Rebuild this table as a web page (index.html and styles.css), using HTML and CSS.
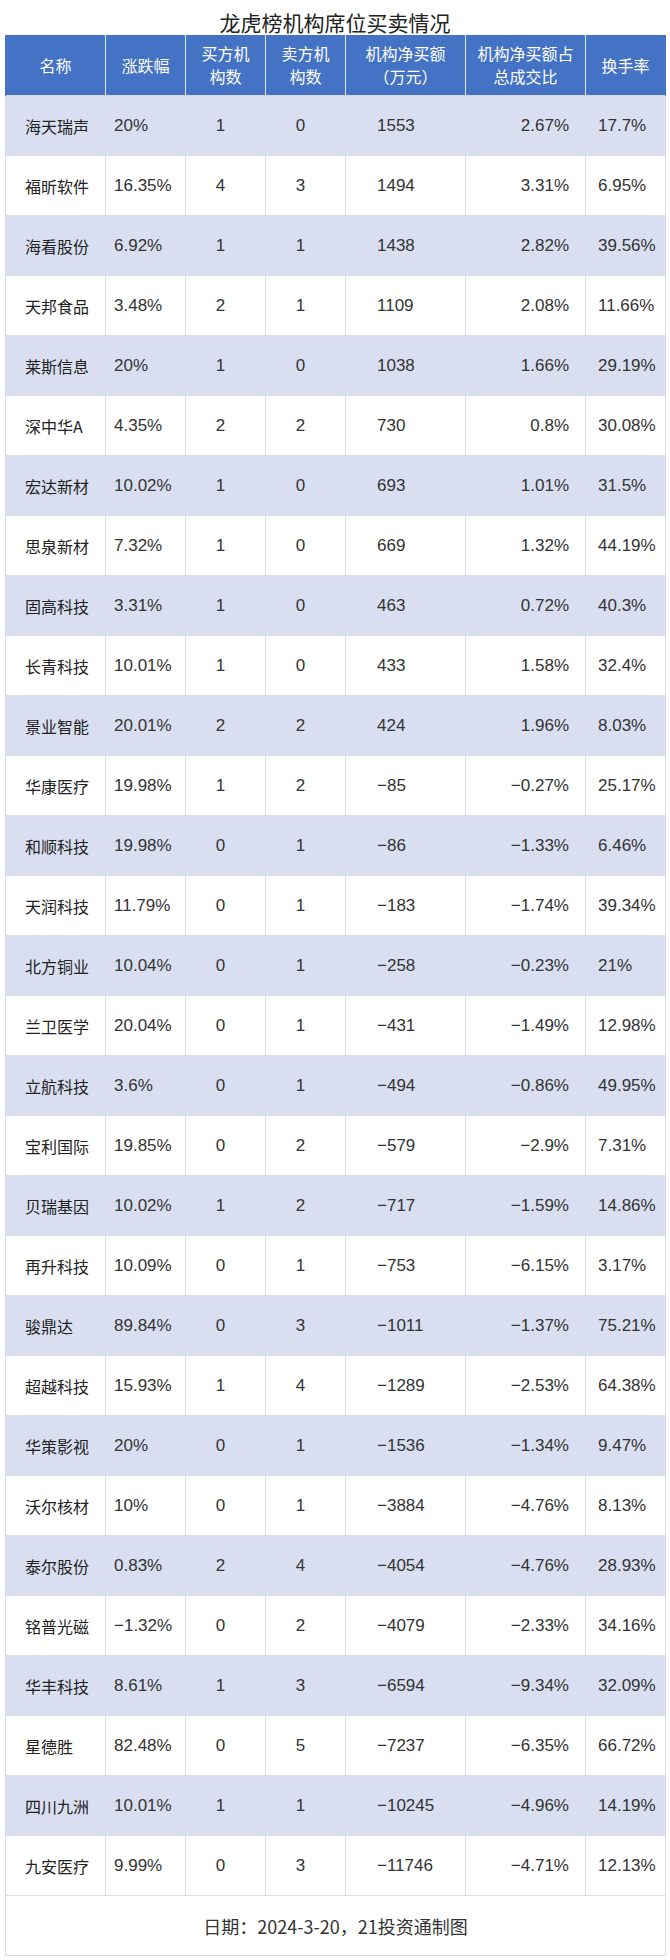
FILE: index.html
```html
<!DOCTYPE html>
<html lang="zh">
<head>
<meta charset="utf-8">
<title>龙虎榜机构席位买卖情况</title>
<link rel="stylesheet" href="styles.css">
</head>
<body>
<div class="page">
  <div class="title">龙虎榜机构席位买卖情况</div>
  <table class="grid">
    <colgroup>
      <col class="w-name"><col class="w-chg"><col class="w-cnt"><col class="w-cnt"><col class="w-amt"><col class="w-ratio"><col class="w-turn">
    </colgroup>
    <thead>
      <tr>
        <th>名称</th>
        <th>涨跌幅</th>
        <th>买方机<br>构数</th>
        <th>卖方机<br>构数</th>
        <th>机构净买额<br><span class="unit"><span class="paren">（</span>万元<span class="paren">）</span></span></th>
        <th>机构净买额占<br>总成交比</th>
        <th>换手率</th>
      </tr>
    </thead>
    <tbody>
      <tr class="alt"><td class="c-name">海天瑞声</td><td class="c-chg">20%</td><td class="c-cnt">1</td><td class="c-cnt">0</td><td class="c-amt">1553</td><td class="c-ratio">2.67%</td><td class="c-turn">17.7%</td></tr>
      <tr><td class="c-name">福昕软件</td><td class="c-chg">16.35%</td><td class="c-cnt">4</td><td class="c-cnt">3</td><td class="c-amt">1494</td><td class="c-ratio">3.31%</td><td class="c-turn">6.95%</td></tr>
      <tr class="alt"><td class="c-name">海看股份</td><td class="c-chg">6.92%</td><td class="c-cnt">1</td><td class="c-cnt">1</td><td class="c-amt">1438</td><td class="c-ratio">2.82%</td><td class="c-turn">39.56%</td></tr>
      <tr><td class="c-name">天邦食品</td><td class="c-chg">3.48%</td><td class="c-cnt">2</td><td class="c-cnt">1</td><td class="c-amt">1109</td><td class="c-ratio">2.08%</td><td class="c-turn">11.66%</td></tr>
      <tr class="alt"><td class="c-name">莱斯信息</td><td class="c-chg">20%</td><td class="c-cnt">1</td><td class="c-cnt">0</td><td class="c-amt">1038</td><td class="c-ratio">1.66%</td><td class="c-turn">29.19%</td></tr>
      <tr><td class="c-name">深中华A</td><td class="c-chg">4.35%</td><td class="c-cnt">2</td><td class="c-cnt">2</td><td class="c-amt">730</td><td class="c-ratio">0.8%</td><td class="c-turn">30.08%</td></tr>
      <tr class="alt"><td class="c-name">宏达新材</td><td class="c-chg">10.02%</td><td class="c-cnt">1</td><td class="c-cnt">0</td><td class="c-amt">693</td><td class="c-ratio">1.01%</td><td class="c-turn">31.5%</td></tr>
      <tr><td class="c-name">思泉新材</td><td class="c-chg">7.32%</td><td class="c-cnt">1</td><td class="c-cnt">0</td><td class="c-amt">669</td><td class="c-ratio">1.32%</td><td class="c-turn">44.19%</td></tr>
      <tr class="alt"><td class="c-name">固高科技</td><td class="c-chg">3.31%</td><td class="c-cnt">1</td><td class="c-cnt">0</td><td class="c-amt">463</td><td class="c-ratio">0.72%</td><td class="c-turn">40.3%</td></tr>
      <tr><td class="c-name">长青科技</td><td class="c-chg">10.01%</td><td class="c-cnt">1</td><td class="c-cnt">0</td><td class="c-amt">433</td><td class="c-ratio">1.58%</td><td class="c-turn">32.4%</td></tr>
      <tr class="alt"><td class="c-name">景业智能</td><td class="c-chg">20.01%</td><td class="c-cnt">2</td><td class="c-cnt">2</td><td class="c-amt">424</td><td class="c-ratio">1.96%</td><td class="c-turn">8.03%</td></tr>
      <tr><td class="c-name">华康医疗</td><td class="c-chg">19.98%</td><td class="c-cnt">1</td><td class="c-cnt">2</td><td class="c-amt">−85</td><td class="c-ratio">−0.27%</td><td class="c-turn">25.17%</td></tr>
      <tr class="alt"><td class="c-name">和顺科技</td><td class="c-chg">19.98%</td><td class="c-cnt">0</td><td class="c-cnt">1</td><td class="c-amt">−86</td><td class="c-ratio">−1.33%</td><td class="c-turn">6.46%</td></tr>
      <tr><td class="c-name">天润科技</td><td class="c-chg">11.79%</td><td class="c-cnt">0</td><td class="c-cnt">1</td><td class="c-amt">−183</td><td class="c-ratio">−1.74%</td><td class="c-turn">39.34%</td></tr>
      <tr class="alt"><td class="c-name">北方铜业</td><td class="c-chg">10.04%</td><td class="c-cnt">0</td><td class="c-cnt">1</td><td class="c-amt">−258</td><td class="c-ratio">−0.23%</td><td class="c-turn">21%</td></tr>
      <tr><td class="c-name">兰卫医学</td><td class="c-chg">20.04%</td><td class="c-cnt">0</td><td class="c-cnt">1</td><td class="c-amt">−431</td><td class="c-ratio">−1.49%</td><td class="c-turn">12.98%</td></tr>
      <tr class="alt"><td class="c-name">立航科技</td><td class="c-chg">3.6%</td><td class="c-cnt">0</td><td class="c-cnt">1</td><td class="c-amt">−494</td><td class="c-ratio">−0.86%</td><td class="c-turn">49.95%</td></tr>
      <tr><td class="c-name">宝利国际</td><td class="c-chg">19.85%</td><td class="c-cnt">0</td><td class="c-cnt">2</td><td class="c-amt">−579</td><td class="c-ratio">−2.9%</td><td class="c-turn">7.31%</td></tr>
      <tr class="alt"><td class="c-name">贝瑞基因</td><td class="c-chg">10.02%</td><td class="c-cnt">1</td><td class="c-cnt">2</td><td class="c-amt">−717</td><td class="c-ratio">−1.59%</td><td class="c-turn">14.86%</td></tr>
      <tr><td class="c-name">再升科技</td><td class="c-chg">10.09%</td><td class="c-cnt">0</td><td class="c-cnt">1</td><td class="c-amt">−753</td><td class="c-ratio">−6.15%</td><td class="c-turn">3.17%</td></tr>
      <tr class="alt"><td class="c-name">骏鼎达</td><td class="c-chg">89.84%</td><td class="c-cnt">0</td><td class="c-cnt">3</td><td class="c-amt">−1011</td><td class="c-ratio">−1.37%</td><td class="c-turn">75.21%</td></tr>
      <tr><td class="c-name">超越科技</td><td class="c-chg">15.93%</td><td class="c-cnt">1</td><td class="c-cnt">4</td><td class="c-amt">−1289</td><td class="c-ratio">−2.53%</td><td class="c-turn">64.38%</td></tr>
      <tr class="alt"><td class="c-name">华策影视</td><td class="c-chg">20%</td><td class="c-cnt">0</td><td class="c-cnt">1</td><td class="c-amt">−1536</td><td class="c-ratio">−1.34%</td><td class="c-turn">9.47%</td></tr>
      <tr><td class="c-name">沃尔核材</td><td class="c-chg">10%</td><td class="c-cnt">0</td><td class="c-cnt">1</td><td class="c-amt">−3884</td><td class="c-ratio">−4.76%</td><td class="c-turn">8.13%</td></tr>
      <tr class="alt"><td class="c-name">泰尔股份</td><td class="c-chg">0.83%</td><td class="c-cnt">2</td><td class="c-cnt">4</td><td class="c-amt">−4054</td><td class="c-ratio">−4.76%</td><td class="c-turn">28.93%</td></tr>
      <tr><td class="c-name">铭普光磁</td><td class="c-chg">−1.32%</td><td class="c-cnt">0</td><td class="c-cnt">2</td><td class="c-amt">−4079</td><td class="c-ratio">−2.33%</td><td class="c-turn">34.16%</td></tr>
      <tr class="alt"><td class="c-name">华丰科技</td><td class="c-chg">8.61%</td><td class="c-cnt">1</td><td class="c-cnt">3</td><td class="c-amt">−6594</td><td class="c-ratio">−9.34%</td><td class="c-turn">32.09%</td></tr>
      <tr><td class="c-name">星德胜</td><td class="c-chg">82.48%</td><td class="c-cnt">0</td><td class="c-cnt">5</td><td class="c-amt">−7237</td><td class="c-ratio">−6.35%</td><td class="c-turn">66.72%</td></tr>
      <tr class="alt"><td class="c-name">四川九洲</td><td class="c-chg">10.01%</td><td class="c-cnt">1</td><td class="c-cnt">1</td><td class="c-amt">−10245</td><td class="c-ratio">−4.96%</td><td class="c-turn">14.19%</td></tr>
      <tr><td class="c-name">九安医疗</td><td class="c-chg">9.99%</td><td class="c-cnt">0</td><td class="c-cnt">3</td><td class="c-amt">−11746</td><td class="c-ratio">−4.71%</td><td class="c-turn">12.13%</td></tr>
    </tbody>
    <tfoot>
      <tr><td class="foot" colspan="7">日期：2024-3-20，21投资通制图</td></tr>
    </tfoot>
  </table>
</div>
</body>
</html>
```
FILE: styles.css
```css
html, body {
  margin: 0;
  padding: 0;
  background: #ffffff;
}
body {
  font-family: "Liberation Sans", "Noto Sans CJK SC", sans-serif;
  color: #333333;
}
.page {
  width: 670px;
  padding: 0 5px;
  box-sizing: border-box;
}
.title {
  height: 26px;
  padding-top: 9px;
  line-height: 26px;
  text-align: center;
  font-family: "Noto Sans CJK SC", sans-serif;
  font-size: 21px;
  color: #222222;
}
.grid {
  width: 660px;
  border-collapse: collapse;
  table-layout: fixed;
}
.w-name { width: 100px; }
.w-chg { width: 80px; }
.w-cnt { width: 80px; }
.w-amt { width: 120px; }
.w-ratio { width: 120px; }
.w-turn { width: 80px; }

.grid th {
  height: 60px;
  padding: 0;
  background: #4472c4;
  color: #ffffff;
  font-family: "Noto Sans CJK SC", sans-serif;
  font-weight: normal;
  font-size: 16px;
  line-height: 23px;
  text-align: center;
  border-left: 1px solid #dfe6f4;
  border-right: 1px solid #dfe6f4;
}
.grid th:first-child { border-left-color: #4472c4; }
.grid th:last-child { border-right-color: #4472c4; }
.unit { white-space: nowrap; }
.paren {
  display: inline-block;
  width: 16px;
  text-align: center;
}

.grid td {
  height: 59px;
  padding: 0;
  font-size: 17px;
  line-height: 22px;
  border: 1px solid #d9dce6;
  white-space: nowrap;
  background: #ffffff;
}
.grid tr.alt td { background: #d9dff1; }

.grid td.c-name {
  padding-left: 19px;
  text-align: left;
  font-family: "Noto Sans CJK SC", sans-serif;
  font-size: 16px;
  color: #222222;
}
.grid td.c-chg {
  padding-left: 8px;
  text-align: left;
}
.grid td.c-cnt {
  text-align: center;
  padding-right: 10px;
}
.grid td.c-amt {
  padding-left: 31px;
  text-align: left;
}
.grid td.c-ratio {
  padding-right: 16px;
  text-align: right;
}
.grid td.c-turn {
  padding-left: 12px;
  text-align: left;
}
.grid td.foot {
  height: 59px;
  text-align: center;
  font-family: "Noto Sans CJK SC", sans-serif;
  font-size: 18px;
  color: #333333;
  background: #ffffff;
}
```
